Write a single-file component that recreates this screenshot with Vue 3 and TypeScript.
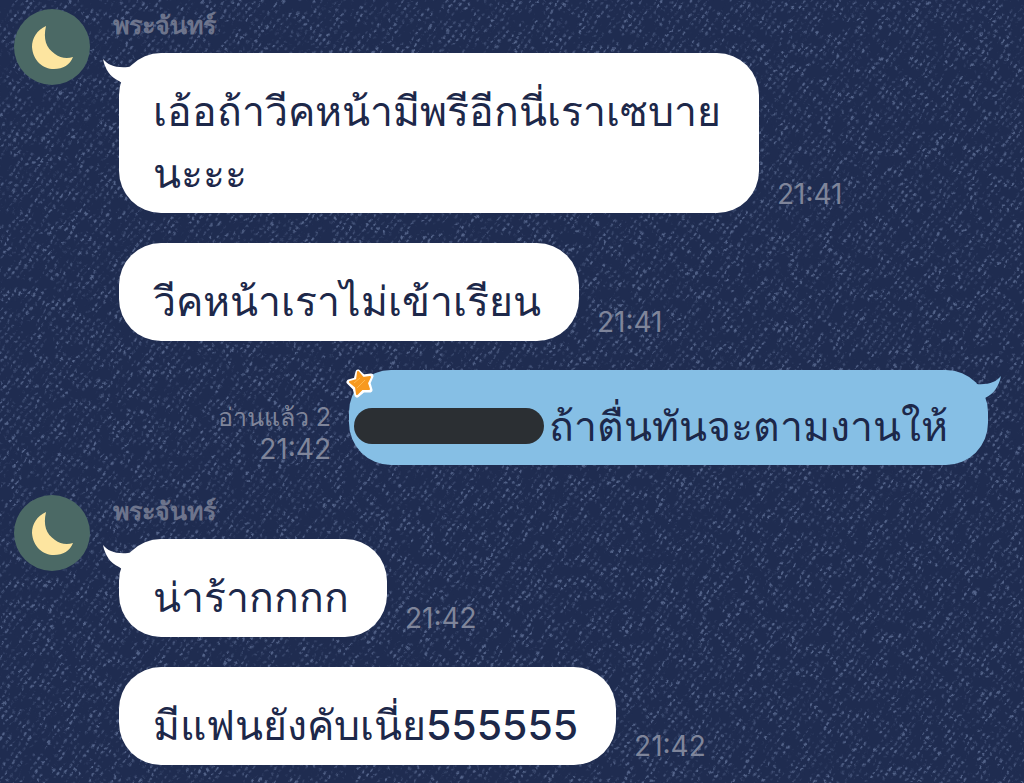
<script setup lang="ts">
interface Message {
  id: number
  text: string
  time: string
  mine?: boolean
  sender?: string
  read?: string
}

const messages: Message[] = [
  { id: 1, sender: 'พระจันทร์', text: 'เอ้อถ้าวีคหน้ามีพรีอีกนี่เราเซบาย\nนะะะ', time: '21:41' },
  { id: 2, text: 'วีคหน้าเราไม่เข้าเรียน', time: '21:41' },
  { id: 3, mine: true, text: 'ถ้าตื่นทันจะตามงานให้', time: '21:42', read: 'อ่านแล้ว 2' },
  { id: 4, sender: 'พระจันทร์', text: 'น่าร้ากกกก', time: '21:42' },
  { id: 5, text: 'มีแฟนยังคับเนี่ย555555', time: '21:42' },
]
</script>

<template>
  <main class="chat">
    <svg class="denim" aria-hidden="true">
      <defs>
        <pattern id="twill" width="6" height="6" patternUnits="userSpaceOnUse" patternTransform="rotate(-54)">
          <ellipse cx="3" cy="3" rx="2" ry="1.3" fill="#54648a" />
        </pattern>
        <filter id="wear" x="0" y="0" width="100%" height="100%" color-interpolation-filters="sRGB">
          <feTurbulence type="fractalNoise" baseFrequency="0.09" numOctaves="3" seed="8" result="noise" />
          <feDisplacementMap in="SourceGraphic" in2="noise" scale="6" xChannelSelector="R" yChannelSelector="G" result="threads" />
          <feColorMatrix in="noise" values="0 0 0 0 1  0 0 0 0 1  0 0 0 0 1  0 0 3.6 0 -1.4" result="fade" />
          <feComposite in="threads" in2="fade" operator="in" />
          <feGaussianBlur stdDeviation="0.5" />
        </filter>
      </defs>
      <rect width="100%" height="100%" fill="url(#twill)" filter="url(#wear)" />
    </svg>

    <article v-for="m in messages" :key="m.id" class="row" :class="{ mine: m.mine }">
      <div v-if="!m.mine" class="side">
        <svg v-if="m.sender" class="avatar" viewBox="0 0 76 76" role="img" aria-label="พระจันทร์">
          <circle cx="38" cy="38" r="38" fill="#4b6965" />
          <path d="M32 17C23 21 18 29 18 38C19 52 29 60 40 60C49 60 56 56 59 48C53 50 46 49 41 45C32 39 29 30 32 17Z" fill="#fde5a0" />
        </svg>
      </div>
      <div class="body">
        <h2 v-if="m.sender" class="name">{{ m.sender }}</h2>
        <div class="line">
          <div class="bubble">
            <svg v-if="m.sender || m.mine" class="tail" viewBox="0 0 40 32" aria-hidden="true">
              <path d="M1 3C6 9 13 12 26 11L38 8L24 30L17 25C8 21 3 13 1 3Z" />
            </svg>
            <svg v-if="m.mine" class="star" viewBox="0 0 28 30" aria-hidden="true">
              <path d="M12 4L17 9L25 8L22 15L24 22L17 22L11 27L9 20L3 14L10 12Z" fill="#fff" stroke="#fff" stroke-width="5" stroke-linejoin="round" />
              <path d="M12 4L17 10L24 9L21 15L23 21L16 21L11 26L10 19L4 14L11 12Z" fill="#f7991f" stroke="#f7991f" stroke-width="2" stroke-linejoin="round" />
              <path d="M8 15L14 10M11 20L19 12" stroke="#ffb94e" stroke-width="1" />
            </svg>
            <span v-if="m.mine" class="redacted"></span>
            <p class="text">{{ m.text }}</p>
          </div>
          <div class="meta">
            <span v-if="m.read" class="read">{{ m.read }}</span>
            <time>{{ m.time }}</time>
          </div>
        </div>
      </div>
    </article>
  </main>
</template>

<style>
body {
  margin: 0;
  background: #1f2c50;
}
</style>

<style scoped>
.chat {
  position: relative;
  box-sizing: border-box;
  min-height: 100vh;
  padding: 9px 36px 17px 14px;
  overflow: hidden;
  background: #1f2c50;
  color: #1d2849;
  font-family: Inter, "Liberation Sans", sans-serif;
}
.denim {
  position: absolute;
  inset: 0;
  width: 100%;
  height: 100%;
}
.row {
  position: relative;
  display: flex;
  margin-top: 30px;
}
.row:first-of-type {
  margin-top: 0;
}
.side {
  flex: 0 0 105px;
}
.avatar {
  display: block;
  width: 76px;
  height: 76px;
}
.body {
  flex: 1;
  min-width: 0;
}
.name {
  height: 44px;
  margin: 0 0 0 -6px;
  color: #6d748c;
  font-size: 25px;
  font-weight: 700;
  line-height: 32px;
}
.line {
  display: flex;
  align-items: flex-end;
  gap: 18px;
}
.bubble {
  position: relative;
  display: flex;
  align-items: center;
  padding: 27px 38px 9px 34px;
  border-radius: 42px;
  background: #fff;
}
.text {
  margin: 0;
  font-size: 41px;
  font-weight: 500;
  line-height: 62px;
  white-space: pre-line;
}
.tail {
  position: absolute;
  top: 3px;
  left: -17px;
  width: 40px;
  height: 32px;
  fill: #fff;
}
.meta {
  display: flex;
  flex-direction: column;
  flex-shrink: 0;
  color: #7f859a;
  font-size: 28px;
  line-height: 32px;
  padding-bottom: 3px;
}
.mine {
  margin-top: 29px;
}
.mine .line {
  flex-direction: row-reverse;
}
.mine .bubble {
  padding: 25px 40px 8px 5px;
  background: #86bfe5;
}
.mine .tail {
  right: -14px;
  left: auto;
  fill: #86bfe5;
  transform: scaleX(-1);
}
.mine .meta {
  text-align: right;
  padding-bottom: 0;
}
.read {
  font-size: 25px;
}
.redacted {
  flex: none;
  width: 190px;
  height: 36px;
  margin-right: 5px;
  border-radius: 18px;
  background: #2b2f33;
}
.star {
  position: absolute;
  top: -2px;
  left: -3px;
  width: 28px;
  height: 30px;
}
</style>
